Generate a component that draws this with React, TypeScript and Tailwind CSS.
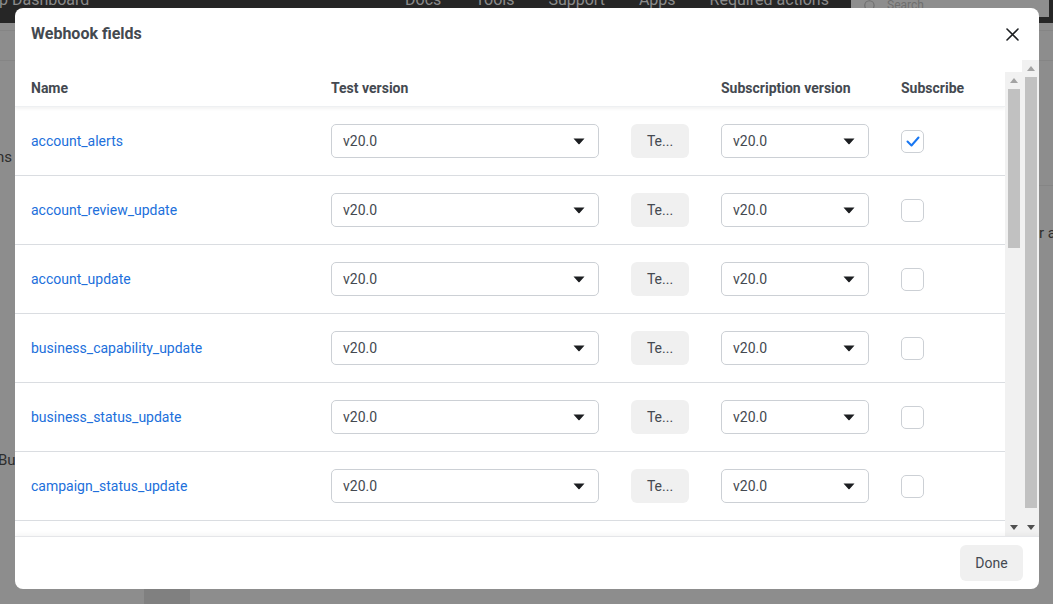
import { Search } from 'lucide-react';

const fields = [
  { name: 'account_alerts', checked: true },
  { name: 'account_review_update', checked: false },
  { name: 'account_update', checked: false },
  { name: 'business_capability_update', checked: false },
  { name: 'business_status_update', checked: false },
  { name: 'campaign_status_update', checked: false },
  { name: 'catalog_update', checked: false },
];

function Caret() {
  return (
    <svg width="12" height="7" viewBox="0 0 12 7" className="flex-shrink-0">
      <path d="M0.5 0.5h11L6.6 5.9a0.8 0.8 0 0 1-1.2 0z" fill="#1c1e21" />
    </svg>
  );
}

function VersionSelect({ width }: { width: string }) {
  return (
    <div className={`${width} h-[34px] flex items-center justify-between pl-[11px] pr-[13px] border border-[#ccd0d5] rounded-[5px] bg-white text-[14px] text-[#444950]`}>
      <span>v20.0</span>
      <Caret />
    </div>
  );
}

function Checkbox({ checked }: { checked: boolean }) {
  return (
    <div className="w-[23px] h-[23px] rounded-[5px] border border-[#ccd0d5] bg-white flex items-center justify-center">
      {checked && (
        <svg width="14" height="11" viewBox="0 0 14 11">
          <path d="M1.5 5.5l4 4 7-8" fill="none" stroke="#1877f2" strokeWidth="2" strokeLinecap="round" strokeLinejoin="round" />
        </svg>
      )}
    </div>
  );
}

function ScrollTrack({ thumbH, offset }: { thumbH: string; offset: string }) {
  return (
    <div className={`${offset} w-[17px] bg-[#f1f1f1] flex flex-col items-center`}>
      <div className="h-[17px] flex items-center justify-center">
        <svg width="8" height="5" viewBox="0 0 8 5"><path d="M0 5h8L4 0z" fill="#a3a3a3" /></svg>
      </div>
      <div className={`${thumbH} w-[12px] bg-[#c1c1c1]`} />
      <div className="flex-1" />
      <div className="h-[17px] flex items-center justify-center">
        <svg width="8" height="5" viewBox="0 0 8 5"><path d="M0 0h8L4 5z" fill="#505050" /></svg>
      </div>
    </div>
  );
}

export default function App() {
  return (
    <div className="relative w-[1053px] h-[604px] overflow-hidden bg-[#8d8d8d] font-['Roboto','Liberation_Sans',sans-serif]">
      {/* dimmed dashboard behind the dialog */}
      <div className="h-[23px] bg-[#262626] flex items-start text-[#8b8b8b] text-[16px] leading-none whitespace-nowrap">
        <span className="w-[406px] relative -top-[8px] -ml-[1px]">p Dashboard</span>
        <div className="w-[446px] flex gap-[34px] relative -top-[8px]">
          <span>Docs</span>
          <span>Tools</span>
          <span>Support</span>
          <span>Apps</span>
          <span>Required actions</span>
        </div>
        <div className="w-[198px] h-[17px] bg-[#8e8e8e] flex items-center gap-[10px] pl-[12px] text-[#6e6e6e] text-[12px] overflow-hidden">
          <Search size={14} strokeWidth={2} className="relative -top-[3px]" />
          <span className="relative -top-[4px]">Search</span>
        </div>
      </div>
      <div className="h-[8px] border-b border-[#858585]" />
      <div className="h-[30px] border-b border-[#858585]" />
      <div className="pt-[85px] text-[#2e2e2e] text-[15px] -ml-[4px]">ns</div>
      <div className="pt-[280px] text-[#2e2e2e] text-[15px] -ml-[2px]">Bu</div>
      <div className="absolute right-0 top-[185px] w-[14px] border-t border-[#858585]" />
      <div className="absolute right-0 top-[222px] text-[#2e2e2e] text-[15px] w-[14px] overflow-hidden whitespace-nowrap">r a</div>
      <div className="absolute left-[144px] top-[589px] w-[46px] h-[15px] bg-[#808080]" />

      {/* dialog */}
      <div className="absolute left-[15px] top-[8px] w-[1024px] h-[581px] bg-white rounded-[8px] flex flex-col overflow-hidden">
        <div className="h-[52px] flex items-center justify-between pl-4 pr-[20px]">
          <span className="text-[16px] font-bold text-[#444950]">Webhook fields</span>
          <svg width="13" height="13" viewBox="0 0 13 13">
            <path d="M1 1l11 11M12 1L1 12" stroke="#1c1e21" strokeWidth="1.6" strokeLinecap="round" />
          </svg>
        </div>

        <div className="h-[476px] flex">
          <div className="flex-1 overflow-hidden">
            <div className="grid grid-cols-[300px_300px_90px_180px_1fr] h-[47px] items-end pb-[7px] text-[14px] font-bold text-[#444950] shadow-[0_2px_3px_rgba(0,0,0,0.05)] border-b border-[#eef0f2] relative">
              <div className="px-4">Name</div>
              <div className="px-4">Test version</div>
              <div className="px-4" />
              <div className="px-4">Subscription version</div>
              <div className="px-4">Subscribe</div>
            </div>
            {fields.map((f) => (
              <div
                key={f.name}
                className="grid grid-cols-[300px_300px_90px_180px_1fr] h-[69px] items-center border-b border-[#dadde1]"
              >
                <div className="px-4 text-[14px] text-[#216fdb]">{f.name}</div>
                <div className="px-4">
                  <VersionSelect width="w-[268px]" />
                </div>
                <div className="px-4">
                  <div className="w-[58px] h-[34px] rounded-[6px] bg-[#f0f0f0] flex items-center justify-center text-[14px] text-[#444950]">
                    Te...
                  </div>
                </div>
                <div className="px-4">
                  <VersionSelect width="w-[148px]" />
                </div>
                <div className="px-4">
                  <Checkbox checked={f.checked} />
                </div>
              </div>
            ))}
          </div>
          <ScrollTrack offset="mt-[12px]" thumbH="h-[159px]" />
          <ScrollTrack offset="mt-0" thumbH="h-[431px]" />
        </div>

        <div className="flex-1 border-t border-[#e5e6e9] shadow-[0_-2px_4px_rgba(0,0,0,0.04)] flex items-center justify-end pr-4 relative">
          <div className="w-[63px] h-[36px] rounded-[6px] bg-[#f0f0f0] flex items-center justify-center text-[14px] text-[#444950]">
            Done
          </div>
        </div>
      </div>
    </div>
  );
}
